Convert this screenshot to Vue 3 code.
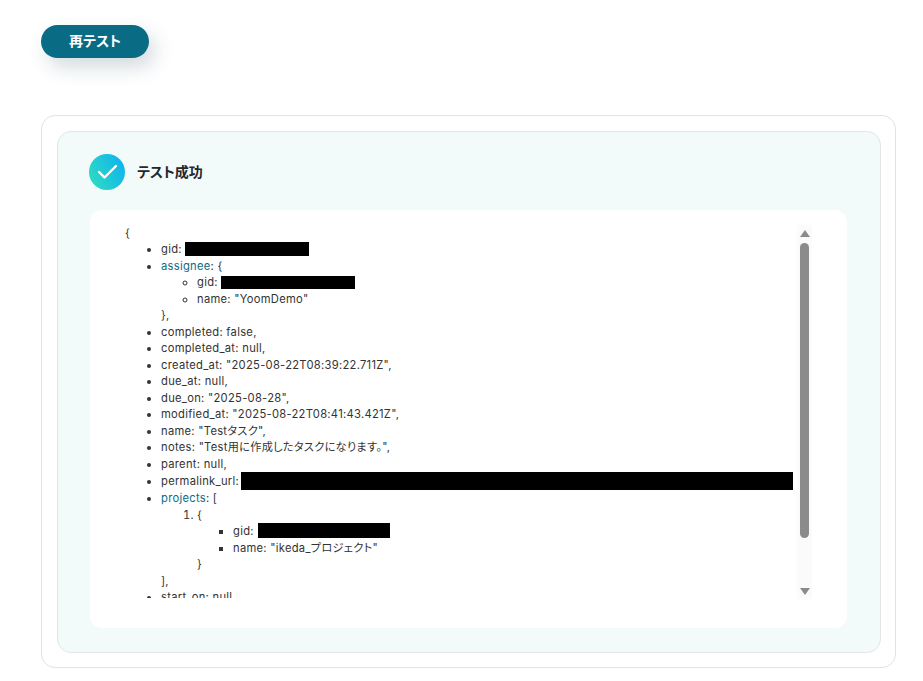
<script setup>
</script>

<template>
  <div class="page">
    <button class="retest">再テスト</button>
    <section class="outer">
      <div class="inner">
        <header class="head">
          <span class="badge">
            <svg width="36" height="36" viewBox="0 0 36 36">
              <defs>
                <linearGradient id="g" x1="0" y1="0.8" x2="1" y2="0.3">
                  <stop offset="0" stop-color="#2fdcc0" />
                  <stop offset="1" stop-color="#0fb4ee" />
                </linearGradient>
              </defs>
              <circle cx="18" cy="18" r="18" fill="url(#g)" />
              <path d="M10 18l5.5 5.5L27 12" fill="none" stroke="#fff" stroke-width="2.4" stroke-linecap="round" stroke-linejoin="round" />
            </svg>
          </span>
          <h2 class="title">テスト成功</h2>
        </header>
        <div class="panel">
          <div class="content">
            <div>{</div>
            <ul class="l1">
              <li>gid:<i class="mask w124"></i></li>
              <li><span class="key">assignee</span>: {
                <ul class="l2">
                  <li>gid: <i class="mask w134"></i></li>
                  <li>name: "YoomDemo"</li>
                </ul>
                },
              </li>
              <li>completed: false,</li>
              <li>completed_at: null,</li>
              <li>created_at: "2025-08-22T08:39:22.711Z",</li>
              <li>due_at: null,</li>
              <li>due_on: "2025-08-28",</li>
              <li>modified_at: "2025-08-22T08:41:43.421Z",</li>
              <li>name: "Testタスク",</li>
              <li>notes: "Test用に作成したタスクになります。",</li>
              <li>parent: null,</li>
              <li>permalink_url:<i class="mask w553"></i></li>
              <li><span class="key">projects</span>: [
                <ol class="l2o">
                  <li>{
                    <ul class="l3">
                      <li>gid: <i class="mask w132"></i></li>
                      <li>name: "ikeda_プロジェクト"</li>
                    </ul>
                    }
                  </li>
                </ol>
                ],
              </li>
              <li>start_on: null,</li>
            </ul>
          </div>
          <div class="scrollbar">
            <span class="arrow up"></span>
            <span class="thumb"></span>
            <span class="arrow down"></span>
          </div>
        </div>
      </div>
    </section>
  </div>
</template>

<style>
body { background: #fff; }
</style>

<style scoped>
.page {
  width: 923px;
  height: 681px;
  box-sizing: border-box;
  padding: 25px 27px 0 41px;
  font-family: Inter, "Noto Sans CJK JP", sans-serif;
  font-feature-settings: "palt";
  overflow: hidden;
}
.retest {
  display: block;
  width: 108px;
  height: 33px;
  padding: 0 0 2px;
  border: 0;
  border-radius: 17px;
  background: #0a6b85;
  color: #fff;
  font: 700 14px/31px Inter, "Noto Sans CJK JP", sans-serif;
  font-feature-settings: "palt";
  box-shadow: 6px 9px 20px rgba(40, 70, 90, 0.2);
}
.outer {
  margin-top: 57px;
  height: 553px;
  box-sizing: border-box;
  padding: 15px 14px 14px 15px;
  border: 1px solid #e2e2e2;
  border-radius: 14px;
}
.inner {
  height: 522px;
  box-sizing: border-box;
  padding: 22px 33px 24px 32px;
  background: #f3fafa;
  border: 1px solid #e2e6e6;
  border-radius: 14px;
}
.head {
  display: flex;
  align-items: center;
  gap: 12px;
  height: 36px;
  margin-left: -1px;
}
.badge { display: block; width: 36px; height: 36px; }
.badge svg { display: block; }
.title {
  margin: 0;
  padding-bottom: 3px;
  font-size: 14px;
  font-weight: 700;
  color: #24282c;
}
.panel {
  display: flex;
  margin-top: 20px;
  height: 418px;
  box-sizing: border-box;
  padding: 15px 35px 29px 35px;
  background: #fff;
  border-radius: 12px;
}
.content {
  flex: 1;
  min-width: 0;
  height: 373px;
  overflow: hidden;
  white-space: nowrap;
  font-size: 11.2px;
  line-height: 16.5px;
  color: #333;
  letter-spacing: 0.025em;
}
ul, ol { margin: 0; padding: 0; }
.l1 { margin-top: -0.4px; padding-left: 36px; list-style: disc; }
.l2 { padding-left: 36px; list-style: circle; }
.l2o { padding-left: 36px; list-style: decimal; }
.l3 { padding-left: 36px; list-style: square; }
.key { color: #0a6b85; }
.mask {
  display: inline-block;
  height: 14px;
  vertical-align: -3px;
  background: #000;
}
.w124 { width: 124px; margin-left: 3px; }
.w134 { width: 134px; height: 13px; }
.w132 { width: 132px; height: 15px; margin-left: 1px; }
.w553 { width: 553px; margin-left: 2px; height: 18px; vertical-align: -5px; }
.scrollbar {
  flex: none;
  width: 15px;
  height: 374px;
  margin-left: 4px;
  background: #fbfbfb;
  display: flex;
  flex-direction: column;
  align-items: center;
  position: relative;
}
.thumb {
  position: absolute;
  top: 18px;
  width: 9px;
  height: 295px;
  border-radius: 5px;
  background: #8b8b8b;
}
.arrow {
  position: absolute;
  width: 0;
  height: 0;
  border-left: 5px solid transparent;
  border-right: 5px solid transparent;
}
.up { top: 5px; border-bottom: 7px solid #8b8b8b; }
.down { bottom: 4px; border-top: 7px solid #8b8b8b; }
</style>
